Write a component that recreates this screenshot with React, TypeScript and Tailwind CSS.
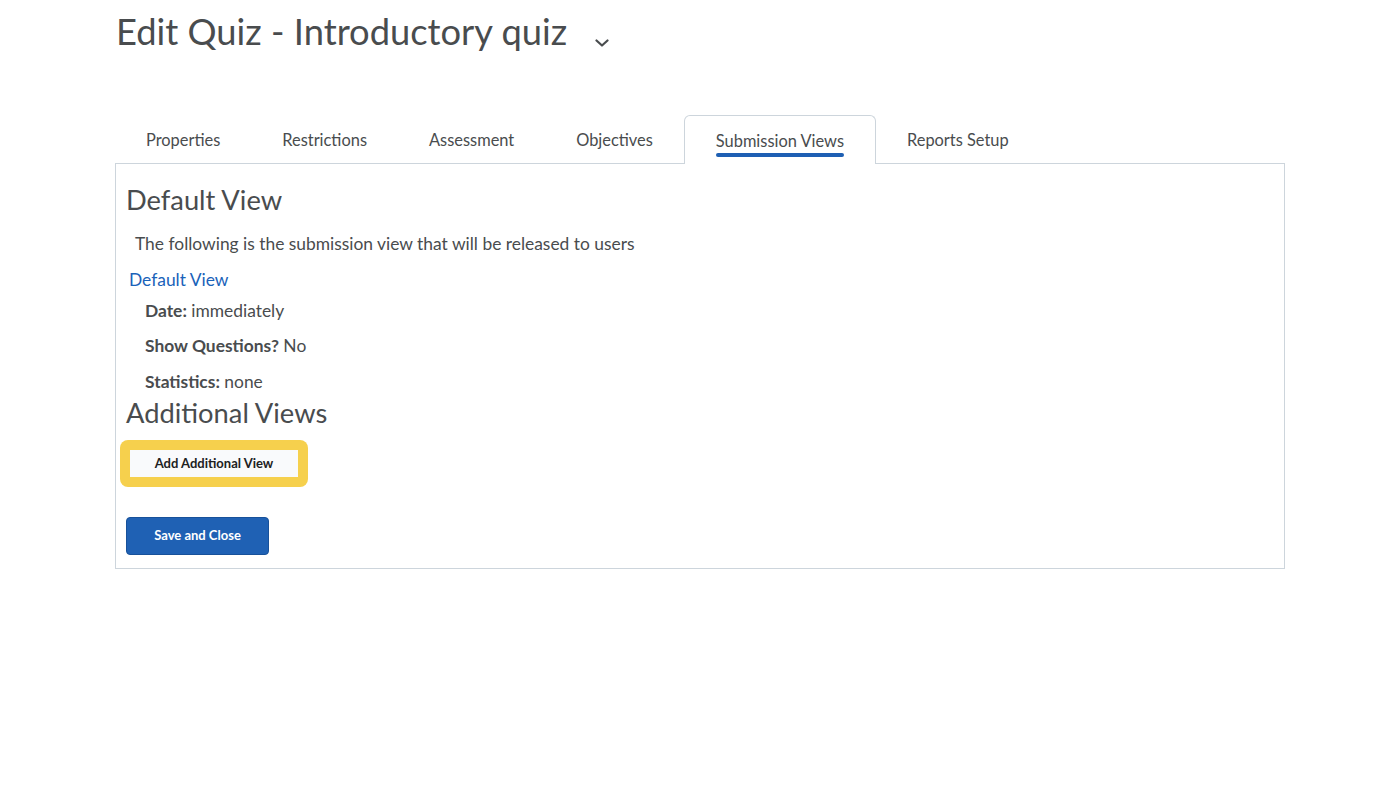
import React from "react";

const tabs = ["Properties", "Restrictions", "Assessment", "Objectives", "Submission Views", "Reports Setup"];

export default function App() {
  return (
    <div className="min-h-screen bg-white text-[#494c4e]" style={{ fontFamily: "Lato, 'Noto Sans', sans-serif" }}>
      <div className="ml-[115px] w-[1170px]">
        <div className="flex pt-[9px] h-[100px] items-start">
          <h1 className="pl-[1px] text-[36.3px] leading-[44px] font-normal">Edit Quiz - Introductory quiz</h1>
          <svg className="ml-[28px] mt-[30px]" width="14" height="8" viewBox="0 0 14 8" fill="none">
            <path d="M1.5 1.5 L7 6.5 L12.5 1.5" stroke="#494c4e" strokeWidth="2.2" strokeLinecap="round" strokeLinejoin="round" />
          </svg>
        </div>
        <div className="flex mt-[15px] h-[48px] items-end">
          {tabs.map((t) => {
            const active = t === "Submission Views";
            return (
              <div
                key={t}
                className={
                  active
                    ? "relative h-[49px] -mb-px px-[31px] flex flex-col items-center justify-center border border-b-0 border-[#cdd5dc] rounded-t-[6px] bg-white z-10"
                    : "h-[48px] px-[31px] flex items-center justify-center"
                }
              >
                <span className={"text-[16.4px] leading-[20px] text-[#494c4e] " + (active ? "mt-[1px]" : "mt-[2px]")}>{t}</span>
                {active && <span className="absolute left-[31px] right-[31px] bottom-[7px] h-[4px] rounded-[2px] bg-[#1e5fb3]" />}
              </div>
            );
          })}
        </div>
        <div className="border border-[#cdd5dc] px-[10px] pt-[20px] pb-[13px]">
          <h2 className="text-[27.3px] leading-[32px] font-normal">Default View</h2>
          <p className="mt-[16px] ml-[9px] text-[17.4px] leading-[24px]">The following is the submission view that will be released to users</p>
          <a className="block mt-[12px] ml-[3px] text-[17.4px] leading-[24px] text-[#1a62b9]">Default View</a>
          <div className="ml-[19px] text-[17.4px] leading-[24px]">
            <p className="mt-[7px]"><span className="font-bold">Date:</span> immediately</p>
            <p className="mt-[11px]"><span className="font-bold">Show Questions?</span> No</p>
            <p className="mt-[12px]"><span className="font-bold">Statistics:</span> none</p>
          </div>
          <h2 className="mt-[3px] text-[27.3px] leading-[32px] font-normal">Additional Views</h2>
          <div className="mt-[11px] -ml-[6px] inline-flex p-[10px] bg-[#f6d04d] rounded-[8px]">
            <button className="w-[168px] h-[27px] bg-[#f9fafc] text-[13px] font-bold text-[#202122]">Add Additional View</button>
          </div>
          <div className="mt-[30px]">
            <button className="w-[143px] h-[38px] rounded-[4px] bg-[#1f61b4] border border-[#17519a] text-white text-[13px] font-bold">Save and Close</button>
          </div>
        </div>
      </div>
    </div>
  );
}
